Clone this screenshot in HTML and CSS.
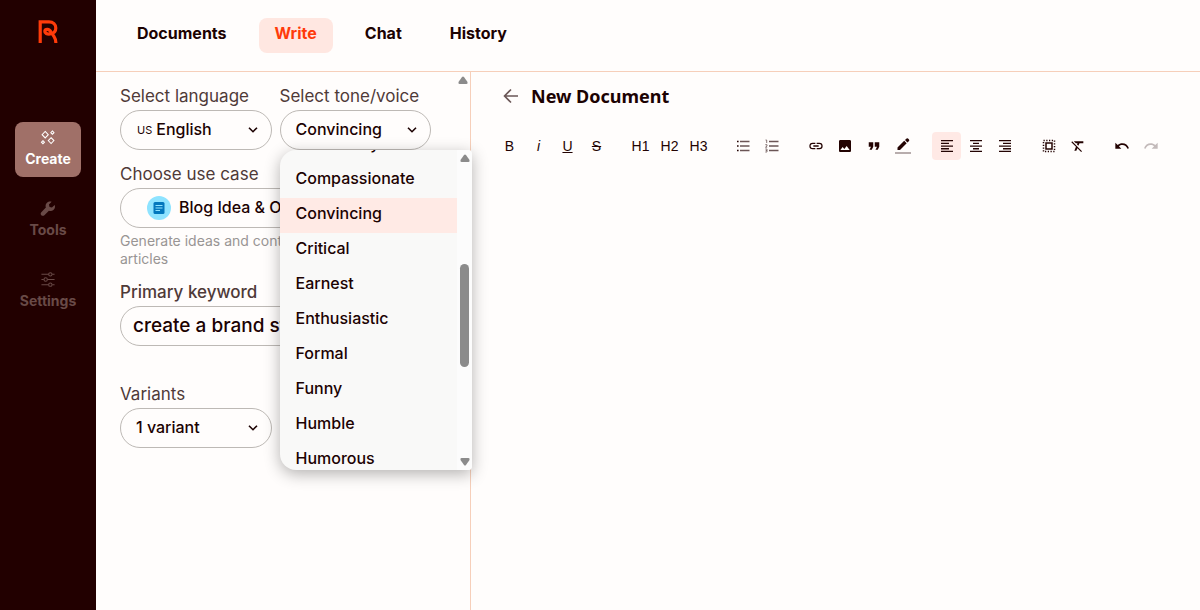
FILE: index.html
```html
<!DOCTYPE html>
<html lang="en">
<head>
    <meta charset="UTF-8">
    <meta name="viewport" content="width=device-width, initial-scale=1.0">
    <title>New Document</title>
    <link rel="stylesheet" href="styles.css">
</head>
<body>
    <div class="app">
        <aside class="sidebar">
            <a class="logo" href="#" aria-label="Home">
                <svg width="20" height="24" viewBox="0 0 20 24" fill="none" stroke="#ff3b0a" stroke-width="3.2">
                    <path d="M2.200 23V1.900H11C15.200 1.900 17.800 4.400 17.800 8C17.800 11.300 15.500 13.600 12 14C9 14.300 6.600 13.200 6.800 11.200C7.200 8.700 11.300 8.600 12.800 11.800L15.800 16.200C17.200 18.300 17.900 20 17.900 23"/>
                </svg>
            </a>
            <nav class="side-nav">
                <a class="side-link active" href="#">
                    <svg width="16" height="16" viewBox="0 0 16 16" fill="none" stroke="currentColor" stroke-width="1.1">
                        <path d="M5 1.500L8.300 5L5 8.500L1.700 5ZM11.300 8.200L14.300 11.300L11.300 14.400L8.300 11.300ZM12.700 1L14.400 2.800L12.700 4.600L11 2.800ZM2.600 11.400L4.200 13L2.600 14.600L1 13Z"/>
                    </svg>
                    Create
                </a>
                <a class="side-link" href="#">
                    <svg width="16" height="16" viewBox="0 0 24 24" fill="currentColor">
                        <path d="M22.700 6.200L18.300 10.500L14.500 9.500L13.500 5.700L17.800 1.300C14.900.2 11.600 1 9.600 3.400C8 5.400 7.700 8.200 8.600 10.500L1.300 17.800C-.1 19.200-.1 21.300 1.300 22.700S4.800 24.100 6.200 22.700L13.500 15.400C15.800 16.300 18.600 16 20.600 14.400C23 12.400 23.800 9.100 22.700 6.200Z"/>
                    </svg>
                    Tools
                </a>
                <a class="side-link" href="#">
                    <svg width="16" height="16" viewBox="0 0 16 16" fill="none" stroke="currentColor" stroke-width="1.1">
                        <path d="M1 2.500H8.500M12.500 2.500H15M1 8H3.500M7.500 8H15M1 13.500H8.500M12.500 13.500H15"/>
                        <circle cx="10.500" cy="2.500" r="1.800"/>
                        <circle cx="5.500" cy="8" r="1.800"/>
                        <circle cx="10.500" cy="13.500" r="1.800"/>
                    </svg>
                    Settings
                </a>
            </nav>
        </aside>

        <div class="main">
            <header class="topbar">
                <nav class="tabs">
                    <a class="tab" href="#">Documents</a>
                    <a class="tab active" href="#">Write</a>
                    <a class="tab" href="#">Chat</a>
                    <a class="tab" href="#">History</a>
                </nav>
            </header>

            <div class="workspace">
                <section class="panel">
                    <form class="form">
                        <div class="row">
                            <div class="group">
                                <label for="language">Select language</label>
                                <div class="field">
                                    <span class="flag">US</span>
                                    <select id="language"><option>English</option></select>
                                    <svg class="chevron" width="10" height="6" viewBox="0 0 10 6"><path d="M1 .7L5 4.700L9 .7"/></svg>
                                </div>
                            </div>
                            <div class="group">
                                <label for="tone">Select tone/voice</label>
                                <div class="field">
                                    <select id="tone"><option>Convincing</option></select>
                                    <svg class="chevron" width="10" height="6" viewBox="0 0 10 6"><path d="M1 .7L5 4.700L9 .7"/></svg>
                                </div>
                                <div class="menu">
                                    <ul class="menu-list" role="listbox" aria-label="Tone">
                                        <li role="option">Cautionary</li>
                                        <li role="option">Compassionate</li>
                                        <li role="option" class="selected" aria-selected="true">Convincing</li>
                                        <li role="option">Critical</li>
                                        <li role="option">Earnest</li>
                                        <li role="option">Enthusiastic</li>
                                        <li role="option">Formal</li>
                                        <li role="option">Funny</li>
                                        <li role="option">Humble</li>
                                        <li role="option">Humorous</li>
                                    </ul>
                                    <div class="scrollbar">
                                        <svg width="10" height="8" viewBox="0 0 10 8"><path d="M4 1Q5 0 6 1L9.500 6Q10 8 8.500 8H1.500Q0 8 .5 6Z"/></svg>
                                        <div class="thumb"></div>
                                        <svg width="10" height="8" viewBox="0 0 10 8"><path d="M4 7Q5 8 6 7L9.500 2Q10 0 8.500 0H1.500Q0 0 .5 2Z"/></svg>
                                    </div>
                                </div>
                            </div>
                        </div>

                        <div class="group">
                            <label for="usecase">Choose use case</label>
                            <div class="field usecase">
                                <svg width="24" height="24" viewBox="0 0 24 24">
                                    <circle cx="12" cy="12" r="12" fill="#8ee3ff"/>
                                    <rect x="6.500" y="6" width="11" height="12" rx="1.500" fill="#0277bd"/>
                                    <path d="M8.500 9.500H15.500M8.500 12H15.500M8.500 14.500H13" stroke="#8ee3ff" stroke-width="1.100"/>
                                </svg>
                                <select id="usecase"><option>Blog Idea &amp; Outline</option></select>
                                <svg class="chevron" width="10" height="6" viewBox="0 0 10 6"><path d="M1 .7L5 4.700L9 .7"/></svg>
                            </div>
                            <p class="hint">Generate ideas and content for your blog articles</p>
                        </div>

                        <div class="group keyword">
                            <label for="keyword">Primary keyword</label>
                            <input class="field" id="keyword" type="text" value="create a brand strategy">
                        </div>

                        <div class="row">
                            <div class="group">
                                <label for="variants">Variants</label>
                                <div class="field">
                                    <select id="variants"><option>1 variant</option></select>
                                    <svg class="chevron" width="10" height="6" viewBox="0 0 10 6"><path d="M1 .7L5 4.700L9 .7"/></svg>
                                </div>
                            </div>
                            <div class="group"></div>
                        </div>
                    </form>
                    <div class="scrollbar">
                        <svg width="10" height="8" viewBox="0 0 10 8"><path d="M4 1Q5 0 6 1L9.500 6Q10 8 8.500 8H1.500Q0 8 .5 6Z"/></svg>
                    </div>
                </section>

                <section class="editor">
                    <div class="doc-head">
                        <button class="back" type="button" aria-label="Back">
                            <svg width="16" height="16" viewBox="0 0 16 16" fill="none" stroke="#6b5757" stroke-width="1.600"><path d="M15 8H1.500M8 1.500L1.500 8L8 14.500"/></svg>
                        </button>
                        <h1>New Document</h1>
                    </div>

                    <div class="toolbar">
                        <div class="tools">
                            <button type="button">B</button>
                            <button type="button"><i>i</i></button>
                            <button type="button"><u>U</u></button>
                            <button type="button"><s>S</s></button>
                        </div>
                        <div class="tools">
                            <button type="button">H1</button>
                            <button type="button">H2</button>
                            <button type="button">H3</button>
                        </div>
                        <div class="tools">
                            <button type="button" aria-label="Bullet list">
                                <svg width="14" height="14" viewBox="0 0 14 14"><path d="M4 2.500H13.500M4 7H13.500M4 11.500H13.500" stroke="#6b5555" stroke-width="1.400"/><path d="M1 1.700H2.600V3.300H1ZM1 6.200H2.600V7.800H1ZM1 10.700H2.600V12.300H1Z"/></svg>
                            </button>
                            <button type="button" aria-label="Numbered list">
                                <svg width="14" height="14" viewBox="0 0 14 14"><path d="M4 2.500H13.500M4 7H13.500M4 11.500H13.500" stroke="#6b5555" stroke-width="1.400"/><path d="M.5 1H1.700V4M.3 5.700H2V7L.5 8.200H2.200M.3 10H2V13H.3M.7 11.500H2" fill="none" stroke="#6b5555" stroke-width=".8"/></svg>
                            </button>
                        </div>
                        <div class="tools">
                            <button type="button" aria-label="Link">
                                <svg width="16" height="16" viewBox="0 0 24 24"><path d="M3.900 12c0-1.710 1.390-3.100 3.100-3.100h4V7H7a5 5 0 0 0 0 10h4v-1.900H7c-1.710 0-3.100-1.390-3.100-3.100zM8 13h8v-2H8v2zm9-6h-4v1.900h4a3.100 3.100 0 0 1 0 6.200h-4V17h4a5 5 0 0 0 0-10z"/></svg>
                            </button>
                            <button type="button" aria-label="Image">
                                <svg width="16" height="16" viewBox="0 0 24 24"><path d="M21 19V5c0-1.100-.9-2-2-2H5c-1.100 0-2 .9-2 2v14c0 1.100.9 2 2 2h14c1.100 0 2-.9 2-2zM8.500 13.500l2.500 3.010L14.500 12l4.500 6H5l3.500-4.500z"/></svg>
                            </button>
                            <button type="button" aria-label="Quote">
                                <svg width="18" height="18" viewBox="0 0 24 24"><path d="M6 17h3l2-4V7H5v6h3zm8 0h3l2-4V7h-6v6h3z"/></svg>
                            </button>
                            <button type="button" aria-label="Highlight">
                                <svg width="18" height="18" viewBox="0 0 18 18"><path d="M3.500 10.500L10.200 3.800L12.700 6.300L6 13H3.500ZM11 3L12.600 1.400Q13.300.9 14 1.500L15 2.500Q15.600 3.200 15 3.900L13.500 5.500Z"/><path d="M1 15H17V17H1Z" fill="#b8adad"/></svg>
                            </button>
                        </div>
                        <div class="tools">
                            <button class="on" type="button" aria-label="Align left">
                                <svg width="14" height="14" viewBox="0 0 14 14"><path d="M1 1H13V2.300H1ZM1 3.700H9V5H1ZM1 6.400H13V7.700H1ZM1 9.100H9V10.400H1ZM1 11.800H13V13.100H1Z"/></svg>
                            </button>
                            <button type="button" aria-label="Align center">
                                <svg width="14" height="14" viewBox="0 0 14 14"><path d="M1 1H13V2.300H1ZM4 3.700H10V5H4ZM1 6.400H13V7.700H1ZM4 9.100H10V10.400H4ZM1 11.800H13V13.100H1Z"/></svg>
                            </button>
                            <button type="button" aria-label="Align right">
                                <svg width="14" height="14" viewBox="0 0 14 14"><path d="M1 1H13V2.300H1ZM5 3.700H13V5H5ZM1 6.400H13V7.700H1ZM5 9.100H13V10.400H5ZM1 11.800H13V13.100H1Z"/></svg>
                            </button>
                        </div>
                        <div class="tools">
                            <button type="button" aria-label="Select all">
                                <svg width="14" height="14" viewBox="0 0 14 14" fill="none" stroke="#230302"><rect x="4" y="4" width="6" height="6" stroke-width="1.500"/><rect x="1.500" y="1.500" width="11" height="11" stroke-width="1.500" stroke-dasharray="1.250 1.500"/></svg>
                            </button>
                            <button type="button" aria-label="Clear formatting">
                                <svg width="16" height="16" viewBox="0 0 24 24"><path d="M3.270 5L2 6.270l6.970 6.970L6.500 19h3l1.570-3.660L16.730 21 18 19.730 3.550 5.270 3.270 5zM6 5v.18L8.820 8h2.400l-.72 1.680 2.100 2.100L14.210 8H20V5H6z"/></svg>
                            </button>
                        </div>
                        <div class="tools">
                            <button type="button" aria-label="Undo">
                                <svg width="16" height="16" viewBox="0 0 24 24"><path d="M12.500 8c-2.650 0-5.050.99-6.900 2.600L2 7v9h9l-3.620-3.620c1.390-1.160 3.160-1.880 5.120-1.880 3.540 0 6.550 2.310 7.600 5.500l2.370-.78C21.080 11.030 17.150 8 12.500 8z"/></svg>
                            </button>
                            <button type="button" aria-label="Redo" disabled>
                                <svg width="16" height="16" viewBox="0 0 24 24"><path d="M18.400 10.600C16.550 8.990 14.150 8 11.500 8c-4.650 0-8.580 3.030-9.960 7.220L3.900 16c1.050-3.190 4.050-5.500 7.600-5.500 1.950 0 3.730.72 5.120 1.880L13 16h9V7l-3.600 3.600z"/></svg>
                            </button>
                        </div>
                    </div>
                </section>
            </div>
        </div>
    </div>
</body>
</html>
```
FILE: styles.css
```css
* {
    box-sizing: border-box;
}
body {
    margin: 0;
    background-color: #fffdfc;
    color: #1c0202;
    font-family: Inter, "Noto Sans", sans-serif;
    font-size: 16px;
}
a {
    color: inherit;
    text-decoration: none;
}
button, select, input {
    font: inherit;
    color: inherit;
}
.app {
    display: flex;
    min-height: 100vh;
}

/* sidebar */
.sidebar {
    flex: none;
    width: 96px;
    background-color: #220000;
    display: flex;
    flex-direction: column;
    align-items: center;
    padding-top: 20px;
}
.logo {
    height: 24px;
}
.logo svg, .side-link svg, .tools svg, .back svg, .scrollbar svg {
    display: block;
}
.side-nav {
    margin-top: 78px;
    display: flex;
    flex-direction: column;
    gap: 16px;
}
.side-link {
    display: flex;
    flex-direction: column;
    align-items: center;
    gap: 4px;
    padding: 8px 0;
    width: 66px;
    height: 55px;
    border-radius: 8px;
    color: #694a47;
    font-size: 14px;
    font-weight: 700;
    line-height: 20px;
}
.side-link.active {
    background-color: #a07068;
    color: #fff;
}

/* top tabs */
.main {
    flex: 1;
    min-width: 0;
    display: flex;
    flex-direction: column;
}
.topbar {
    height: 72px;
    padding: 18px 25px;
    border-bottom: 1px solid #f6cfba;
}
.tabs {
    display: flex;
    gap: 16px;
}
.tab {
    padding: 3px 16px;
    height: 35px;
    line-height: 24px;
    border-radius: 8px;
    font-weight: 700;
}
.tab.active {
    background-color: #ffe7e1;
    color: #ff3b0a;
}

/* left form */
.workspace {
    flex: 1;
    display: flex;
}
.panel {
    flex: none;
    width: 375px;
    display: flex;
    border-right: 1px solid #f6cfba;
}
.form {
    flex: 1;
    padding: 12px 24px 24px;
    display: flex;
    flex-direction: column;
    gap: 12px;
}
.row {
    display: flex;
    gap: 8px;
}
.row .group {
    flex: 1;
}
.group {
    position: relative;
}
label {
    display: block;
    margin-bottom: 2px;
    color: #4f3a38;
    font-size: 17px;
    line-height: 24px;
    white-space: nowrap;
}
.field {
    position: relative;
    display: flex;
    align-items: center;
    width: 100%;
    height: 40px;
    border: 1px solid #bdb9b5;
    border-radius: 20px;
    background-color: #fffdfc;
}
.field select {
    flex: 1;
    min-width: 0;
    height: 100%;
    padding: 0 30px 2px 15px;
    border: none;
    border-radius: 20px;
    background: none;
    appearance: none;
    font-weight: 500;
}
.flag {
    padding: 0 0 0 16px;
    font-size: 11px;
}
.flag + select {
    padding-left: 4px;
}
.chevron {
    position: absolute;
    right: 13px;
    top: 16px;
    fill: none;
    stroke: #1c0202;
    stroke-width: 1.6px;
    pointer-events: none;
}
.usecase {
    padding-left: 26px;
}
.usecase select {
    padding-left: 8px;
}
.hint {
    margin: 4px 0 0;
    color: #999594;
    font-size: 14px;
    line-height: 18px;
}
.keyword {
    margin-bottom: 24px;
}
.keyword label {
    font-weight: 500;
}
input.field {
    padding: 0 12px 2px;
    font-size: 19px;
    font-weight: 500;
}

/* tone menu */
.menu {
    position: absolute;
    z-index: 2;
    top: 66px;
    left: 0;
    display: flex;
    width: 192px;
    height: 320px;
    overflow: hidden;
    border-radius: 16px 4px 4px 16px;
    background-color: #f9f9f8;
    box-shadow: 0 4px 16px rgba(0, 0, 0, 0.3);
}
.menu-list {
    flex: 1;
    margin: -22px 0 0;
    padding: 0;
    list-style: none;
}
.menu-list li {
    height: 35px;
    padding-left: 16px;
    line-height: 30px;
    font-weight: 500;
}
.menu-list .selected {
    background-color: #ffeae5;
}
.scrollbar {
    flex: none;
    width: 15px;
    padding: 4px 0 4px 3px;
    fill: #8b8b8b;
}
.menu .scrollbar {
    display: flex;
    flex-direction: column;
    background-color: #fcfcfc;
}
.thumb {
    width: 9px;
    height: 103px;
    margin: 102px 0 auto;
    border-radius: 5px;
    background-color: #8b8b8b;
}

/* editor */
.editor {
    flex: 1;
    min-width: 0;
    padding: 12px 16px 24px 24px;
}
.doc-head {
    display: flex;
    align-items: center;
    gap: 12px;
    padding-left: 8px;
    height: 24px;
}
.back {
    padding: 0;
    border: none;
    background: none;
}
h1 {
    margin: 0;
    font-family: "Noto Sans", sans-serif;
    font-size: 18px;
    line-height: 24px;
}
.toolbar {
    display: flex;
    flex-wrap: wrap;
    gap: 15px;
    margin-top: 24px;
}
.tools {
    display: flex;
}
.tools button {
    display: flex;
    align-items: center;
    justify-content: center;
    width: 29px;
    height: 28px;
    padding: 0;
    border: none;
    border-radius: 4px;
    background: none;
    color: #230302;
    fill: #230302;
    font-family: "Liberation Sans", sans-serif;
    font-size: 14px;
}
.tools .on {
    background-color: #ffe9e5;
}
.tools button:disabled {
    fill: #c3baba;
}
```
